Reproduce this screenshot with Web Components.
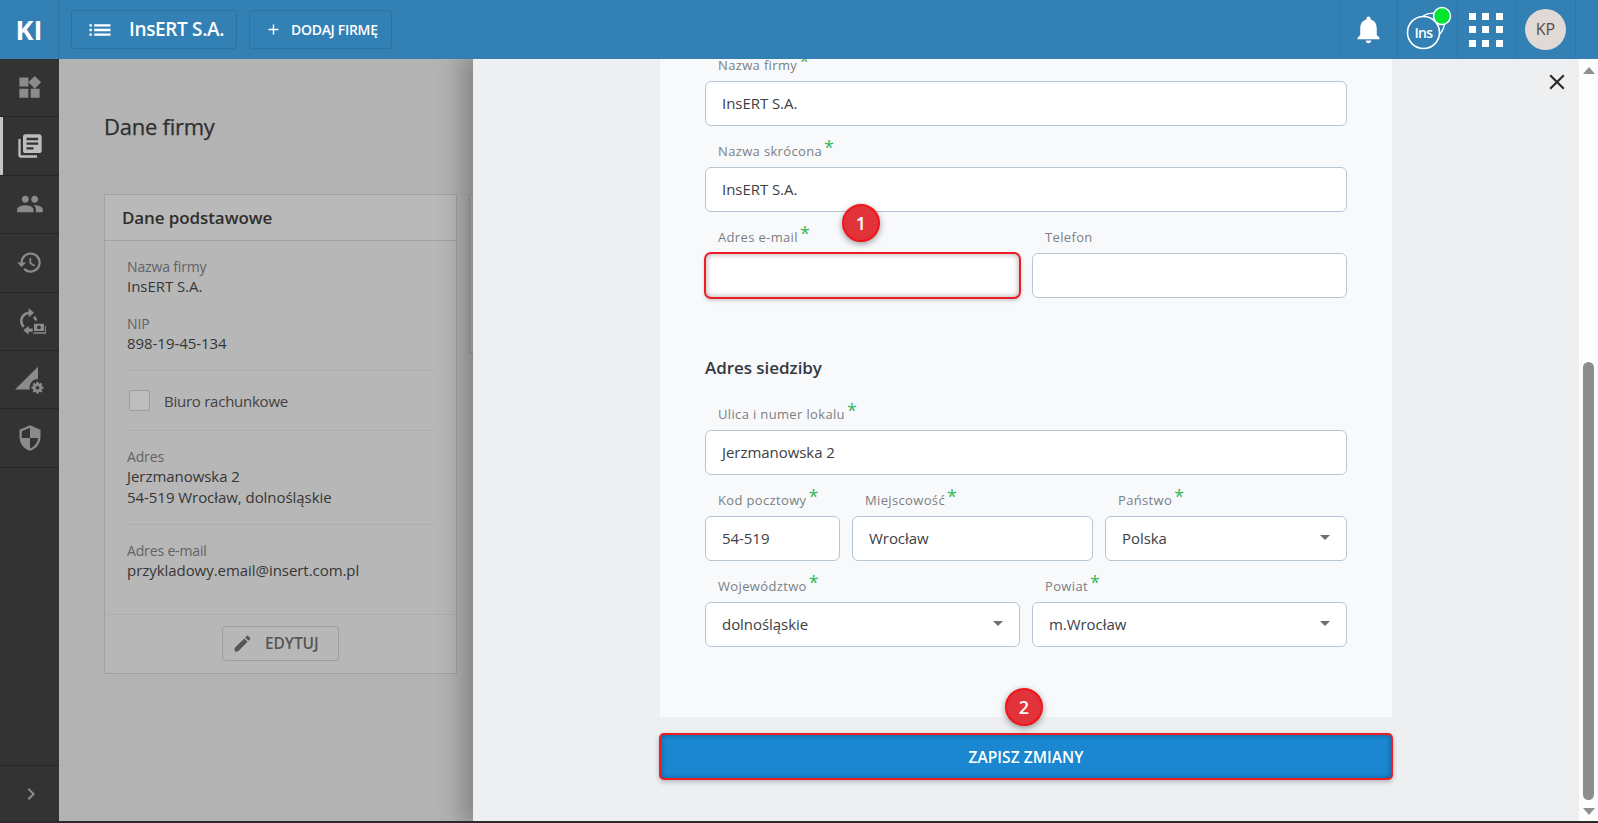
<!DOCTYPE html>
<html lang="pl"><head><meta charset="utf-8"><title>Dane firmy</title>
<style>
html,body{margin:0;padding:0;height:823px;overflow:hidden;background:#2b2b2b;font-family:"Open Sans","Noto Sans","Liberation Sans",sans-serif}
</style></head>
<body>
<app-shell>
  <top-bar slot="top"></top-bar>
  <side-nav slot="side"></side-nav>
  <main-area slot="main">
    <h-title>Dane firmy</h-title>
    <card-row>
      <info-card heading="Dane podstawowe">
        <info-field label="Nazwa firmy">InsERT S.A.</info-field>
        <info-field label="NIP" gap>898-19-45-134</info-field>
        <card-rule style="margin-top:16.5px"></card-rule>
        <check-row>Biuro rachunkowe</check-row>
        <card-rule></card-rule>
        <info-field label="Adres">Jerzmanowska 2<br>54-519 Wrocław, dolnośląskie</info-field>
        <card-rule style="margin-top:16.5px"></card-rule>
        <info-field label="Adres e-mail">przykladowy.email@insert.com.pl</info-field>
      </info-card>
      <stub-card></stub-card>
    </card-row>
    <edit-drawer slot="drawer">
      <form-grid cols="1fr" style="margin-top:-19px"><form-field label="Nazwa firmy" req value="InsERT S.A." first></form-field></form-grid>
      <form-grid cols="1fr"><form-field label="Nazwa skrócona" req value="InsERT S.A."></form-field></form-grid>
      <form-grid cols="1fr 1fr" gap="12">
        <form-field label="Adres e-mail" req alert></form-field>
        <form-field label="Telefon"></form-field>
      </form-grid>
      <form-heading>Adres siedziby</form-heading>
      <form-grid cols="1fr"><form-field label="Ulica i numer lokalu" req value="Jerzmanowska 2"></form-field></form-grid>
      <form-grid cols="135px 1fr 242px" gap="12">
        <form-field label="Kod pocztowy" req value="54-519"></form-field>
        <form-field label="Miejscowość" req value="Wrocław"></form-field>
        <form-field label="Państwo" req value="Polska" select></form-field>
      </form-grid>
      <form-grid cols="1fr 1fr" gap="12">
        <form-field label="Województwo" req value="dolnośląskie" select></form-field>
        <form-field label="Powiat" req value="m.Wrocław" select></form-field>
      </form-grid>
    </edit-drawer>
  </main-area>
</app-shell>
<script>
function gear(cx,cy,ro,ri,h){
  let d='';const n=8;
  for(let k=0;k<n;k++){
    const a=k*2*Math.PI/n,w=Math.PI/n*.55;
    [[ri,a-w*1.5],[ro,a-w*.7],[ro,a+w*.7],[ri,a+w*1.5]].forEach((p,i)=>{
      d+=(k===0&&i===0?'M':'L')+(cx+p[0]*Math.cos(p[1])).toFixed(2)+' '+(cy+p[0]*Math.sin(p[1])).toFixed(2);
    });
  }
  return d+`zM${cx-h} ${cy}a${h} ${h} 0 1 0 ${2*h} 0a${h} ${h} 0 1 0 ${-2*h} 0z`;
}
const P={
 widgets:'M13 13v8h8v-8h-8zM3 21h8v-8H3v8zM3 3v8h8V3H3zm13.66-1.31L11 7.34 16.66 13l5.66-5.66-5.66-5.65z',
 books:'M4 6H2v14c0 1.1.9 2 2 2h14v-2H4V6zm16-4H8c-1.1 0-2 .9-2 2v12c0 1.1.9 2 2 2h12c1.1 0 2-.9 2-2V4c0-1.1-.9-2-2-2zm-1 9H9V9h10v2zm-4 4H9v-2h6v2zm4-8H9V5h10v2z',
 people:'M16 11c1.66 0 2.99-1.34 2.99-3S17.66 5 16 5c-1.66 0-3 1.34-3 3s1.34 3 3 3zm-8 0c1.66 0 2.99-1.34 2.99-3S9.66 5 8 5C6.34 5 5 6.34 5 8s1.34 3 3 3zm0 2c-2.33 0-7 1.17-7 3.5V19h14v-2.5c0-2.33-4.67-3.5-7-3.5zm8 0c-.29 0-.62.02-.97.05 1.16.84 1.97 1.97 1.97 3.45V19h6v-2.5c0-2.33-4.67-3.5-7-3.5z',
 history:'M13 3c-4.97 0-9 4.03-9 9H1l3.89 3.89.07.14L9 12H6c0-3.87 3.13-7 7-7s7 3.13 7 7-3.13 7-7 7c-1.93 0-3.68-.79-4.94-2.06l-1.42 1.42C8.27 19.99 10.51 21 13 21c4.97 0 9-4.03 9-9s-4.03-9-9-9zm-1 5v5l4.28 2.54.72-1.21-3.5-2.08V8H12z',
 shield:'M12 1L3 5v6c0 5.55 3.84 10.74 9 12 5.16-1.26 9-6.45 9-12V5l-9-4zm0 10.99h7c-.53 4.12-3.28 7.79-7 8.94V12H5V6.3l7-3.11v8.8z',
 bell:'M12 22c1.1 0 2-.9 2-2h-4c0 1.1.89 2 2 2zm6-6v-5c0-3.07-1.64-5.64-4.5-6.32V4c0-.83-.67-1.5-1.5-1.5s-1.5.67-1.5 1.5v.68C7.63 5.36 6 7.92 6 11v5l-2 2v1h16v-1l-2-2z',
 edit:'M3 17.25V21h3.75L17.81 9.94l-3.75-3.75L3 17.25zM20.71 7.04c.39-.39.39-1.02 0-1.41l-2.34-2.34c-.39-.39-1.02-.39-1.41 0l-1.83 1.83 3.75 3.75 1.83-1.83z',
 close:'M19 6.41L17.59 5 12 10.59 6.41 5 5 6.41 10.59 12 5 17.59 6.41 19 12 13.41 17.59 19 19 17.59 13.41 12z',
 list:'M3 13h2v-2H3v2zm0 4h2v-2H3v2zm0-8h2V7H3v2zm4 4h14v-2H7v2zm0 4h14v-2H7v2zM7 7v2h14V7H7z',
 chevron:'M10 6L8.59 7.41 13.17 12l-4.58 4.59L10 18l6-6z',
 plus:'M19 13h-6v6h-2v-6H5v-2h6V5h2v6h6v2z',
 cycle:'M11 2.5v2.3C7.3 5.3 4.5 8.3 4.5 12c0 2 .8 3.8 2.1 5.1L8 15.7A5.3 5.3 0 0 1 6.5 12c0-2.6 1.9-4.7 4.500-5.100v2.400L15 5.900zM15.700 8.200l-1.400 1.400c.6.6 1 1.300 1.200 2.100h2c-.3-1.400-.9-2.600-1.800-3.500zM11 15.500l-4 3.400 4 3.400v-2.200h3v-2.400h-3z M15 14h7.500v5.500H15zM18.700 15.400a1.400 1.400 0 1 0 0 2.800 1.400 1.400 0 0 0 0-2.800z M14.500 20.500h8.800v-5h.7v6h-9.500z',
 wedge:'M19 1.500V11.500a7 7 0 0 0-6.700 8.700H0z'+gear(18.6,18.8,5,3.700,1.500)
};
function def(name,css,html,init){
  customElements.define(name,class extends HTMLElement{
    constructor(){super();this.attachShadow({mode:'open'});}
    connectedCallback(){
      const h=typeof html==='function'?html(this):html;
      this.shadowRoot.innerHTML='<style>'+css+'</style>'+h;
      if(init)init(this);
    }
  });
}
def('x-icon',':host{display:inline-flex;line-height:0}svg{display:block;fill:currentColor}',
  e=>{const s=e.getAttribute('size')||24;return `<svg width="${s}" height="${s}" viewBox="0 0 24 24"><path fill-rule="evenodd" d="${P[e.getAttribute('name')]}"/></svg>`});

def('app-shell',`:host{display:grid;grid-template-columns:59px 1fr;grid-template-rows:59px 1fr;height:821px;overflow:hidden}
 .t{grid-column:1/3;display:block}.s{display:block}.m{display:block;min-width:0}
 ::slotted(*){min-height:0}`,
 '<slot class="t" name="top"></slot><slot class="s" name="side"></slot><slot class="m" name="main"></slot>');

def('top-btn',`:host{display:flex;align-items:center;box-sizing:border-box;height:39px;border:1px solid #2d72a3;border-radius:3px;color:#fff}`,'<slot></slot>');
def('top-cell',`:host{display:flex;align-items:center;justify-content:center;box-sizing:border-box;height:59px;border-left:1px solid #2f75a6;color:#fff}`,'<slot></slot>');
def('top-bar',`:host{display:flex;align-items:center;height:59px;background:#3380b5;color:#fff}
 .logo{width:59px;height:59px;box-sizing:border-box;border-right:1px solid #2f75a6;display:flex;align-items:center;justify-content:center;font:700 27px "Open Sans",sans-serif;flex:none}
 .co{margin-left:12px;width:166px;padding-left:14px}
 .co span{font:600 19px/1 "Open Sans",sans-serif;margin-left:15px;letter-spacing:-.35px;white-space:nowrap}
 .add{margin-left:12px;width:143px;padding-left:15px}
 .add span{font:600 14px/1 "Open Sans",sans-serif;margin-left:9px;letter-spacing:-.3px;white-space:nowrap}
 .sp{flex:1}
 .grid{display:grid;grid-template-columns:repeat(3,7px);gap:6.5px;margin-right:2px}
 .grid i{width:7px;height:7px;background:#fff;display:block}
 .ava{width:41px;height:41px;border-radius:50%;background:#e0d9d5;color:#5b4a44;font:400 16px/41px "Open Sans",sans-serif;text-align:center}
 svg{display:block}`,
 `<div class="logo">KI</div>
  <top-btn class="co"><x-icon name="list" size="28"></x-icon><span>InsERT S.A.</span></top-btn>
  <top-btn class="add"><x-icon name="plus" size="17"></x-icon><span>DODAJ FIRMĘ</span></top-btn>
  <div class="sp"></div>
  <top-cell style="width:58px"><x-icon name="bell" size="33"></x-icon></top-cell>
  <top-cell style="width:60px"><svg width="58" height="58" viewBox="0 0 58 58"><path d="M24 15C31 10.500 41 11.500 44 17c3 5.500 1 13-6 19" fill="none" stroke="#fff" stroke-width="1.300"/><circle cx="24.500" cy="31.500" r="16" fill="#3380b5" stroke="#fff" stroke-width="1.600"/><text x="24.500" y="36.500" text-anchor="middle" font-family="Open Sans" font-weight="600" font-size="14" letter-spacing="-.6" fill="#fff">Ins</text><circle cx="43" cy="15" r="8.500" fill="#00e432" stroke="#fff" stroke-width="1.500"/></svg></top-cell>
  <top-cell style="width:58px"><div class="grid"><i></i><i></i><i></i><i></i><i></i><i></i><i></i><i></i><i></i></div></top-cell>
  <top-cell style="width:60px"><div class="ava">KP</div></top-cell>
  <top-cell style="width:23px"></top-cell>`);

def('nav-item',`:host{display:flex;align-items:center;justify-content:center;box-sizing:border-box;height:58.4px;border-bottom:1px solid #262626;color:#8b8b8b;position:relative;flex:none}
 :host([active]){color:#bdbdbd;box-shadow:inset 3px 0 0 #c4c4c4}`,'<slot></slot>');
def('side-nav',`:host{display:flex;flex-direction:column;height:762px;background:#333;position:relative}
 .sp{flex:1}
 .b{height:55px;border-top:1px solid #262626;display:flex;align-items:center;justify-content:center;color:#8b8b8b;padding-left:2px}`,
 `<nav-item><x-icon name="widgets" size="27"></x-icon></nav-item>
  <nav-item active><x-icon name="books" size="28"></x-icon></nav-item>
  <nav-item><x-icon name="people" size="28"></x-icon></nav-item>
  <nav-item><x-icon name="history" size="27"></x-icon></nav-item>
  <nav-item><x-icon name="cycle" size="32"></x-icon></nav-item>
  <nav-item><x-icon name="wedge" size="29"></x-icon></nav-item>
  <nav-item><x-icon name="shield" size="28"></x-icon></nav-item>
  <div class="sp"></div>
  <div class="b"><x-icon name="chevron" size="24"></x-icon></div>`);

def('main-area',`:host{display:block;position:relative;height:762px;background:#b3b3b3;padding:52px 0 0 45px;box-sizing:border-box;overflow:hidden}`,'<slot></slot><slot name="drawer"></slot>');
def('h-title',`:host{display:block;font:500 22px/30px "Open Sans",sans-serif;color:#2e2e2e;margin-bottom:53px;letter-spacing:-.25px;-webkit-text-stroke:.25px #2e2e2e}`,'<slot></slot>');
def('card-row',`:host{display:flex;gap:12px;align-items:flex-start}`,'<slot></slot>');
def('info-card',`:host{display:flex;flex-direction:column;box-sizing:border-box;width:353px;height:480px;border:1px solid #a2a2a2;background:#b7b7b7;color:#333;flex:none}
 header{height:46px;box-sizing:border-box;border-bottom:1px solid #a2a2a2;background:#b9b9b9;padding-left:17px;font:600 17px/45px "Open Sans",sans-serif;color:#2e2e2e;letter-spacing:-.1px}
 .body{flex:1;padding:16px 22px 0;}
 footer{height:59px;box-sizing:border-box;border-top:1px solid #aeaeae;display:flex;justify-content:center;padding-top:11px}
 .edit{box-sizing:border-box;width:117px;height:35px;border:1px solid #9e9e9e;border-radius:3px;display:flex;align-items:center;color:#555;padding-left:9px;font:600 15.500px/1 "Open Sans",sans-serif}
 .edit span{margin-left:12px;letter-spacing:-.1px}`,
 e=>`<header>${e.getAttribute('heading')}</header><div class="body"><slot></slot></div>
 <footer><div class="edit"><x-icon name="edit" size="21"></x-icon><span>EDYTUJ</span></div></footer>`);
def('stub-card',`:host{display:block;width:300px;height:159px;border:1px solid #a2a2a2;box-sizing:border-box;flex:none;background:#b7b7b7}`,'');
def('info-field',`:host{display:block;font:400 15px/20.5px "Open Sans",sans-serif;color:#363636;letter-spacing:-.05px}
 :host([gap]){margin-top:17.5px}
 .l{color:#626262;display:block;font-size:14px;letter-spacing:-.15px;margin-bottom:-1.5px}`,e=>`<span class="l">${e.getAttribute('label')}</span><slot></slot>`);
def('card-rule',`:host{display:block;height:1px;background:#aeaeae;margin:16px 0 16px}`,'');
def('check-row',`:host{display:flex;align-items:center;height:43px;margin:-8px 0 -8px;font:400 15px/20px "Open Sans",sans-serif;color:#424242;letter-spacing:-.25px}
 i{box-sizing:border-box;width:21px;height:21px;border:1px solid #9d9d9d;border-radius:2px;background:#bdbdbd;margin:0 14px 0 2px;display:block}`,'<i></i><slot></slot>');

def('edit-drawer',`:host{position:absolute;left:414px;top:0;right:0;bottom:0;background:#eeeff1;box-shadow:-4px 0 24px 6px rgba(0,0,0,.28);display:flex}
 .col{width:732px;margin-left:187px;flex:none;display:flex;flex-direction:column}
 .panel{background:#f8f9fb;padding:0 45px 70px;height:658px;box-sizing:border-box;overflow:hidden}
 .cta{position:relative;margin:16px -1px 0;height:47px;box-sizing:border-box;border:2px solid #ee1c25;border-radius:5px;background:#1a87d0;box-shadow:inset 0 0 5px #10578f,0 2px 5px rgba(0,0,0,.25);color:#fff;font:600 15.500px/45px "Open Sans",sans-serif;text-align:center;letter-spacing:.05px}
 .x{position:absolute;top:10px;right:28px;color:#2b2b2b}
 .sb{position:absolute;top:0;right:0;bottom:0;width:19px;background:#fdfdfd;display:flex;flex-direction:column;align-items:center;padding-top:8px;box-sizing:border-box}
 .up{width:0;height:0;border:6.500px solid transparent;border-top:0;border-bottom:7px solid #8f8f8f}
 .th{width:11px;height:438px;background:#8d8d8d;border-radius:6px;margin:288px 0 8px}
 .dn{width:0;height:0;border:6.500px solid transparent;border-bottom:0;border-top:7px solid #8f8f8f}`,
 `<div class="col"><div class="panel"><slot></slot></div><div class="cta">ZAPISZ ZMIANY<step-badge style="left:344px;top:-47px">2</step-badge></div></div>
  <div class="x"><x-icon name="close" size="26"></x-icon></div>
  <div class="sb"><div class="up"></div><div class="th"></div><div class="dn"></div></div>`);
def('step-badge',`:host{position:absolute;box-sizing:border-box;width:38px;height:38px;border-radius:50%;background:#e2323a;border:2px solid #f0141c;box-shadow:0 2px 6px rgba(0,0,0,.4);color:#fff;font:600 18px/34px "Open Sans",sans-serif;text-align:center;z-index:3;letter-spacing:0}`,'<slot></slot>');
def('form-grid',`:host{display:grid;grid-template-columns:var(--c);column-gap:var(--g)}`,'<slot></slot>',
 e=>{e.style.setProperty('--c',e.getAttribute('cols'));e.style.setProperty('--g',(e.getAttribute('gap')||0)+'px')});
def('form-heading',`:host{display:block;font:600 17px/22px "Open Sans",sans-serif;color:#343a40;margin:59px 0 10px;letter-spacing:-.05px}`,'<slot></slot>');
def('form-field',`:host{display:block;position:relative;min-width:0}
 label{display:block;box-sizing:border-box;height:41px;padding:16px 0 0 13px;font:400 13px/18px "Open Sans",sans-serif;color:#7b7f83;letter-spacing:.35px;white-space:nowrap}
 b{font:400 18px/1 "Open Sans",sans-serif;color:#37b75c;display:inline-block;transform:translate(1px,-4px);height:18px;letter-spacing:0;margin-left:1px;vertical-align:top}
 .in{box-sizing:border-box;height:45px;border:1px solid #b8c5d2;border-radius:6px;background:#fff;padding:0 16px 0 16px;display:flex;align-items:center;justify-content:space-between;font:400 15px/1 "Open Sans",sans-serif;color:#3c4045;letter-spacing:-.05px}
 .in i{width:0;height:0;border:5.500px solid transparent;border-bottom:0;border-top:5.500px solid #6f6f6f;margin-top:-3px}
 :host([alert]) .in{outline:2px solid #ee1c25;outline-offset:-1px;box-shadow:inset 0 0 6px rgba(0,0,0,.35),0 2px 4px rgba(0,0,0,.25);border-color:transparent}`,
 e=>`<label>${e.getAttribute('label')}${e.hasAttribute('req')?'<b>*</b>':''}</label><div class="in"><span>${e.getAttribute('value')||''}</span>${e.hasAttribute('select')?'<i></i>':''}</div>${e.hasAttribute('alert')?'<step-badge style="left:137px;top:-8px">1</step-badge>':''}`);
</script>
</body></html>
